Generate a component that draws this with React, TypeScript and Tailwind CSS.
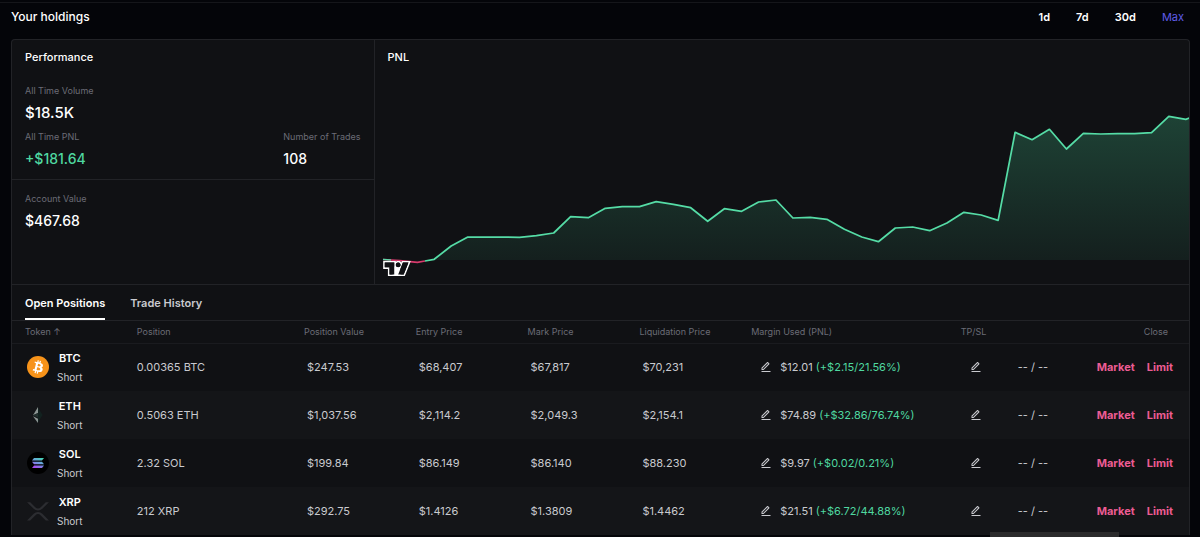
import { useState } from 'react'
import type { ReactNode } from 'react'
import { RiEditLine } from 'react-icons/ri'

type Position = {
  token: string
  side: string
  size: string
  value: string
  entry: string
  mark: string
  liquidation: string
  margin: string
  pnl: string
  icon: ReactNode
}

const BtcIcon = () => (
  <svg viewBox="0 0 32 32" className="size-[22px]" aria-hidden="true">
    <circle cx="16" cy="16" r="16" fill="#f7931a" />
    <path
      fill="#fff"
      d="M23.189 14.02c.314-2.096-1.283-3.223-3.465-3.975l.708-2.84-1.728-.43-.69 2.765c-.454-.114-.92-.22-1.385-.326l.695-2.783L15.596 6l-.708 2.839c-.376-.086-.746-.17-1.104-.26l.002-.009-2.384-.595-.46 1.846s1.283.294 1.256.312c.7.175.826.638.805 1.006l-.806 3.235c.048.012.11.03.18.057l-.183-.045-1.13 4.532c-.086.212-.303.531-.793.41.018.025-1.256-.313-1.256-.313l-.858 1.978 2.25.561c.418.105.828.215 1.231.318l-.715 2.872 1.727.43.708-2.84c.472.127.93.245 1.378.357l-.706 2.828 1.728.43.715-2.866c2.948.558 5.164.333 6.097-2.333.752-2.146-.037-3.385-1.588-4.192 1.13-.26 1.98-1.003 2.207-2.538zm-3.95 5.538c-.533 2.147-4.148.986-5.32.695l.95-3.805c1.172.293 4.929.872 4.37 3.11zm.535-5.569c-.487 1.953-3.495.96-4.47.717l.86-3.45c.975.243 4.118.696 3.61 2.733z"
    />
  </svg>
)

const EthIcon = () => (
  <svg viewBox="0 0 22 22" className="size-[22px]" aria-hidden="true">
    <path fill="#12211f" d="M11 3.5 15.6 11 11 18.5z" />
    <path fill="#8b9492" d="M11 3v6L6 11.2z" />
    <path fill="#22302e" d="M11 9v4.6L6 11.2z" />
    <path fill="#8b9492" d="M11 19v-4.2L6 12.2z" />
  </svg>
)

const SolIcon = () => (
  <svg viewBox="0 0 22 22" className="size-[22px]" aria-hidden="true">
    <defs>
      <linearGradient id="sol" x1="15" y1="5" x2="9" y2="17" gradientUnits="userSpaceOnUse">
        <stop offset="0" stopColor="#3fe0b0" />
        <stop offset="0.5" stopColor="#6f9be0" />
        <stop offset="1" stopColor="#b040f5" />
      </linearGradient>
    </defs>
    <circle cx="11" cy="11" r="11" fill="#000" />
    <g fill="url(#sol)">
      <path d="M7 6h10l-2 2.5H5z" />
      <path d="M5 9.8h10l2 2.5H7z" />
      <path d="M7 13.6h10l-2 2.5H5z" />
    </g>
  </svg>
)

const XrpIcon = () => (
  <svg viewBox="6 6 20 20" className="size-[22px]" aria-hidden="true">
    <path
      fill="#2c2d31"
      d="M23.07 8h2.89l-6.015 5.957a5.621 5.621 0 01-7.89 0L6.035 8H8.93l4.57 4.523a3.556 3.556 0 004.996 0L23.07 8zM8.895 24.563H6l6.055-5.993a5.621 5.621 0 017.89 0L26 24.562h-2.895L18.5 20a3.556 3.556 0 00-4.996 0l-4.61 4.563z"
    />
  </svg>
)

const positions: Position[] = [
  {
    token: 'BTC',
    side: 'Short',
    size: '0.00365 BTC',
    value: '$247.53',
    entry: '$68,407',
    mark: '$67,817',
    liquidation: '$70,231',
    margin: '$12.01',
    pnl: '(+$2.15/21.56%)',
    icon: <BtcIcon />,
  },
  {
    token: 'ETH',
    side: 'Short',
    size: '0.5063 ETH',
    value: '$1,037.56',
    entry: '$2,114.2',
    mark: '$2,049.3',
    liquidation: '$2,154.1',
    margin: '$74.89',
    pnl: '(+$32.86/76.74%)',
    icon: <EthIcon />,
  },
  {
    token: 'SOL',
    side: 'Short',
    size: '2.32 SOL',
    value: '$199.84',
    entry: '$86.149',
    mark: '$86.140',
    liquidation: '$88.230',
    margin: '$9.97',
    pnl: '(+$0.02/0.21%)',
    icon: <SolIcon />,
  },
  {
    token: 'XRP',
    side: 'Short',
    size: '212 XRP',
    value: '$292.75',
    entry: '$1.4126',
    mark: '$1.3809',
    liquidation: '$1.4462',
    margin: '$21.51',
    pnl: '(+$6.72/44.88%)',
    icon: <XrpIcon />,
  },
]

const columns = [
  { label: 'Token ↑', className: 'w-[9.5%]' },
  { label: 'Position', className: 'w-[14.2%]' },
  { label: 'Position Value', className: 'w-[9.5%]' },
  { label: 'Entry Price', className: 'w-[9.5%]' },
  { label: 'Mark Price', className: 'w-[9.5%]' },
  { label: 'Liquidation Price', className: 'w-[9.5%]' },
  { label: 'Margin Used (PNL)', className: 'w-[17.8%]' },
  { label: 'TP/SL', className: 'w-[10%]' },
]

const ranges = ['1d', '7d', '30d', 'Max']
const tabs = ['Open Positions', 'Trade History']

// The line starts slightly below zero, then stays positive
const lossLine = '8,179.5 25,180.7 42.5,182.3 50,181'
const gainLine =
  '50,181 59.3,179.3 76.3,166 93,157 110.3,157 127.7,157 144.7,157.3 161.7,155.7 179,153 196,136.7 213.7,137.7 230.7,128.3 247.7,126.7 265,126.7 281.7,121.7 299,124.3 316.3,127.7 333.3,141.3 350,128.7 367.3,131.3 384.3,122 401.7,120 418.7,138 436,137.3 452.7,139.3 470.3,149.3 487.7,157 504.3,161.7 521.3,148 538.7,147 555.7,150.7 573,143 590,132.3 607.3,135 624.3,140.3 641.3,52.3 658.3,59.7 675.7,49.3 692.7,69 709.7,53.3 727,54 744,53.7 761,53.7 778,52.7 795.3,36.3 812.3,39.3 816,38'

const PnlChart = () => (
  <svg
    viewBox="0 0 816 204"
    preserveAspectRatio="none"
    className="block h-[204px] w-full"
    role="img"
    aria-label="PNL over time"
  >
    <defs>
      <linearGradient id="gain" x1="0" y1="36" x2="0" y2="180" gradientUnits="userSpaceOnUse">
        <stop offset="0" stopColor="#4ade9f" stopOpacity="0.24" />
        <stop offset="1" stopColor="#4ade9f" stopOpacity="0.07" />
      </linearGradient>
    </defs>
    <polygon points={`56,180 ${gainLine.slice(7)} 816,180`} fill="url(#gain)" />
    <g fill="none" strokeWidth="1.75" strokeLinejoin="round">
      <polyline points={lossLine} stroke="#d63a6c" vectorEffect="non-scaling-stroke" />
      <polyline points="8,179.5 16,180" stroke="#5fd6a8" vectorEffect="non-scaling-stroke" />
      <polyline points={gainLine} stroke="#55dca6" vectorEffect="non-scaling-stroke" />
    </g>
  </svg>
)

const TradingViewLogo = () => (
  <svg viewBox="0 0 35 19" className="h-[15px] w-[28px]" aria-hidden="true">
    <g fillRule="evenodd">
      <path
        fill="#fff"
        d="M2 0H0v10h6v9h21.4l.5-1.3 6-15 1-2.7H23.7l-.5 1.3-.2.6a5 5 0 0 0-7-.9V0H2Zm20 17h4l5.2-13 .8-2h-7l-1 2.5-.2.5-1.5 3.8-.3.7V17Zm-.8-10a3 3 0 0 0 .7-2.7A3 3 0 1 0 16.8 7h4.4ZM14 7V2H2v6h6v9h4V7h2Z"
      />
      <path
        fill="#101114"
        d="M14 2H2v6h6v9h6V2Zm12 15h-7l6-15h7l-6 15Zm-7-9a3 3 0 1 0 0-6 3 3 0 0 0 0 6Z"
      />
    </g>
  </svg>
)

const Stat = ({ label, children }: { label: string; children: ReactNode }) => (
  <div>
    <dt className="text-[9px] leading-4 text-[#6b6c76]">{label}</dt>
    <dd className="text-[14px] font-medium leading-7 text-white">{children}</dd>
  </div>
)

const EditButton = ({ label }: { label: string }) => (
  <button type="button" aria-label={label} className="text-[#c9cacf]">
    <RiEditLine className="size-3" />
  </button>
)

const App = () => {
  const [range, setRange] = useState('Max')
  const [tab, setTab] = useState('Open Positions')

  return (
    <div className="min-h-screen bg-[#040509] pt-[2px] font-['Inter',sans-serif] text-[11px] text-[#c9cacf]">
      <div className="border-t border-[#15161a] pl-[11px] pr-[10px]">
        <header className="mb-2 flex h-7 items-center justify-between pr-[6px]">
          <h1 className="text-[12px] font-medium text-white">Your holdings</h1>
          <div className="flex gap-[26px]">
            {ranges.map((item) => (
              <button
                key={item}
                type="button"
                onClick={() => setRange(item)}
                className={item === range ? 'text-[#5f5ce8]' : 'font-semibold text-white'}
              >
                {item}
              </button>
            ))}
          </div>
        </header>

        <main className="rounded-t-sm border border-b-0 border-[#222327] bg-[#101114]">
          <div className="flex border-b border-[#222327]">
            <section className="w-[30.8%] border-r border-[#222327]">
              <div className="border-b border-[#222327] px-[13px] pb-[6px] pt-2">
                <h2 className="mb-[17px] font-medium leading-[18px] text-white">Performance</h2>
                <dl className="flex flex-col gap-[2px]">
                  <Stat label="All Time Volume">
                    <span className="text-[15px]">$18.5K</span>
                  </Stat>
                  <div className="flex justify-between">
                    <Stat label="All Time PNL">
                      <span className="text-[#4fd8a0]">+$181.64</span>
                    </Stat>
                    <Stat label="Number of Trades">108</Stat>
                  </div>
                </dl>
              </div>
              <dl className="px-[13px] pt-[11px]">
                <Stat label="Account Value">$467.68</Stat>
              </dl>
            </section>

            <section className="relative min-w-0 flex-1">
              <h2 className="px-[13px] pb-[14px] pt-2 font-medium leading-[18px] text-white">PNL</h2>
              <PnlChart />
              <a href="#tradingview" aria-label="TradingView" className="absolute bottom-2 left-2">
                <TradingViewLogo />
              </a>
            </section>
          </div>

          <nav className="flex gap-[25px] border-b border-[#222327] px-[13px]">
            {tabs.map((item) => (
              <button
                key={item}
                type="button"
                onClick={() => setTab(item)}
                className={`h-[35px] border-b-2 pt-[3px] font-semibold ${
                  item === tab ? 'border-white text-white' : 'border-transparent text-[#c9cacf]'
                }`}
              >
                {item}
              </button>
            ))}
          </nav>

          <table className="w-full table-fixed text-left">
            <thead className="text-[9px] text-[#6b6c76]">
              <tr className="h-[22px] border-b border-[#1a1b1f]">
                {columns.map((column) => (
                  <th key={column.label} className={`pl-[13px] font-normal ${column.className}`}>
                    {column.label}
                  </th>
                ))}
                <th className="pr-[21px] text-right font-normal">Close</th>
              </tr>
            </thead>
            <tbody>
              {positions.map((position) => (
                <tr key={position.token} className="h-12 whitespace-nowrap even:bg-[#141518]">
                  <td className="pl-[15px]">
                    <div className="flex items-center gap-2">
                      {position.icon}
                      <div className="text-center">
                        <div className="font-semibold leading-5 text-white">{position.token}</div>
                        <div className="text-[10px] leading-[18px]">{position.side}</div>
                      </div>
                    </div>
                  </td>
                  <td className="pl-[13px]">{position.size}</td>
                  <td className="pl-4">{position.value}</td>
                  <td className="pl-4">{position.entry}</td>
                  <td className="pl-4">{position.mark}</td>
                  <td className="pl-4">{position.liquidation}</td>
                  <td className="pl-[22px]">
                    <div className="flex items-center gap-2">
                      <EditButton label={`Edit ${position.token} margin`} />
                      <span>
                        {position.margin} <span className="text-[#4fd8a0]">{position.pnl}</span>
                      </span>
                    </div>
                  </td>
                  <td className="pl-[22px]">
                    <div className="flex items-center gap-9">
                      <EditButton label={`Edit ${position.token} take profit and stop loss`} />
                      <span>-- / --</span>
                    </div>
                  </td>
                  <td className="pr-4">
                    <div className="flex justify-end gap-3 font-bold text-[#ec5c93]">
                      <button type="button">Market</button>
                      <button type="button">Limit</button>
                    </div>
                  </td>
                </tr>
              ))}
            </tbody>
          </table>
        </main>
      </div>

      <div className="fixed bottom-0 right-[81px] h-[5px] w-[129px] bg-[#2b2b2c]" />
    </div>
  )
}

export default App
